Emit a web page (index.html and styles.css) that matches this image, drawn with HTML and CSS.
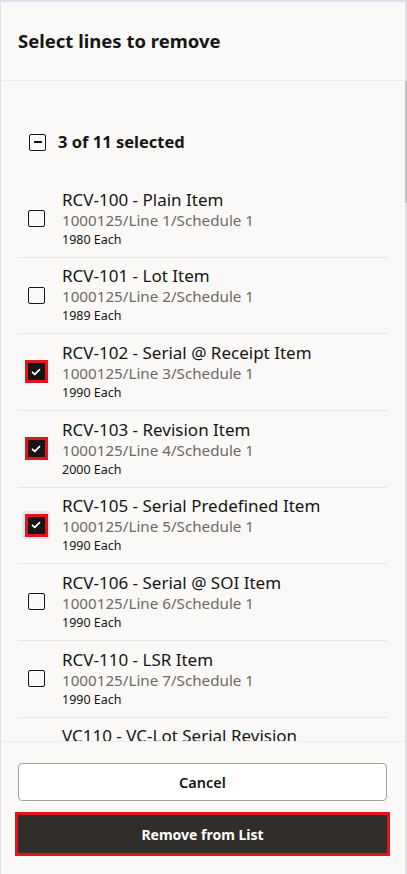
FILE: index.html
```html
<!DOCTYPE html>
<html lang="en">
<head>
<meta charset="utf-8">
<title>Select lines to remove</title>
<link rel="stylesheet" href="styles.css">
</head>
<body>
<div class="dialog">
  <header class="dlg-header">
    <h1 class="dlg-title">Select lines to remove</h1>
  </header>
  <div class="dlg-body">
    <div class="scroll-thumb"></div>
    <div class="scroller">
      <div class="select-all">
        <span class="cb cb-mixed"><span class="dash"></span></span>
        <span class="select-all-text">3 of 11 selected</span>
      </div>
      <ul class="lines">
        <li class="line">
          <div class="cb-cell"><span class="cb"></span></div>
          <div class="line-text">
            <div class="line-title">RCV-100 - Plain Item</div>
            <div class="line-sub">1000125/Line 1/Schedule 1</div>
            <div class="line-qty">1980 Each</div>
          </div>
        </li>
        <li class="line">
          <div class="cb-cell"><span class="cb"></span></div>
          <div class="line-text">
            <div class="line-title">RCV-101 - Lot Item</div>
            <div class="line-sub">1000125/Line 2/Schedule 1</div>
            <div class="line-qty">1989 Each</div>
          </div>
        </li>
        <li class="line">
          <div class="cb-cell"><span class="cb cb-checked"><svg viewBox="0 0 16 16" class="tick"><path d="M4 8.3l2.6 2.5L12 5.4" /></svg></span></div>
          <div class="line-text">
            <div class="line-title">RCV-102 - Serial @ Receipt Item</div>
            <div class="line-sub">1000125/Line 3/Schedule 1</div>
            <div class="line-qty">1990 Each</div>
          </div>
        </li>
        <li class="line">
          <div class="cb-cell"><span class="cb cb-checked"><svg viewBox="0 0 16 16" class="tick"><path d="M4 8.3l2.6 2.5L12 5.4" /></svg></span></div>
          <div class="line-text">
            <div class="line-title">RCV-103 - Revision Item</div>
            <div class="line-sub">1000125/Line 4/Schedule 1</div>
            <div class="line-qty">2000 Each</div>
          </div>
        </li>
        <li class="line">
          <div class="cb-cell cb-focus"><span class="cb cb-checked"><svg viewBox="0 0 16 16" class="tick"><path d="M4 8.3l2.6 2.5L12 5.4" /></svg></span></div>
          <div class="line-text">
            <div class="line-title">RCV-105 - Serial Predefined Item</div>
            <div class="line-sub">1000125/Line 5/Schedule 1</div>
            <div class="line-qty">1990 Each</div>
          </div>
        </li>
        <li class="line">
          <div class="cb-cell"><span class="cb"></span></div>
          <div class="line-text">
            <div class="line-title">RCV-106 - Serial @ SOI Item</div>
            <div class="line-sub">1000125/Line 6/Schedule 1</div>
            <div class="line-qty">1990 Each</div>
          </div>
        </li>
        <li class="line">
          <div class="cb-cell"><span class="cb"></span></div>
          <div class="line-text">
            <div class="line-title">RCV-110 - LSR Item</div>
            <div class="line-sub">1000125/Line 7/Schedule 1</div>
            <div class="line-qty">1990 Each</div>
          </div>
        </li>
        <li class="line">
          <div class="cb-cell"><span class="cb"></span></div>
          <div class="line-text">
            <div class="line-title">VC110 - VC-Lot Serial Revision</div>
            <div class="line-sub">1000125/Line 8/Schedule 1</div>
            <div class="line-qty">1990 Each</div>
          </div>
        </li>
      </ul>
    </div>
  </div>
  <footer class="dlg-footer">
    <button class="btn btn-outline" type="button">Cancel</button>
    <button class="btn btn-primary" type="button">Remove from List</button>
  </footer>
</div>
</body>
</html>
```

FILE: styles.css
```css
* { box-sizing: border-box; }

html, body {
  margin: 0;
  padding: 0;
  height: 100%;
}

body {
  background: #dedee6;
  font-family: "Noto Sans", "Open Sans", sans-serif;
  color: #161513;
}

.dialog {
  width: 407px;
  height: 874px;
  border-top: 2px solid #dedee6;
  border-left: 1px solid #dedee6;
  border-right: 2px solid #dedee6;
  background: #faf9f8;
  display: flex;
  flex-direction: column;
}

.dlg-header {
  height: 79px;
  flex: 0 0 auto;
  border-bottom: 1px solid #efedeb;
  padding: 0 17px;
  display: flex;
  align-items: center;
}

.dlg-title {
  margin: 0 0 1px;
  font-size: 18.5px;
  font-weight: 700;
  line-height: 24px;
  letter-spacing: 0;
}

.dlg-body {
  flex: 1 1 auto;
  position: relative;
  min-height: 0;
}

.scroller {
  height: 100%;
  overflow: hidden;
  padding: 39px 18px 0 17px;
}

.scroll-thumb {
  position: absolute;
  right: -2px;
  top: 0;
  width: 2px;
  height: 122px;
  background: #bdbec9;
}

.select-all {
  height: 44px;
  display: flex;
  align-items: center;
  padding-left: 11px;
  margin-bottom: 17px;
}

.select-all-text {
  margin-left: 12px;
  font-size: 16.5px;
  font-weight: 700;
  line-height: 20px;
}

.cb {
  width: 17px;
  height: 17px;
  border: 1.5px solid #161513;
  border-radius: 2px;
  display: inline-flex;
  align-items: center;
  justify-content: center;
  background: transparent;
  flex: 0 0 auto;
}

.cb-mixed .dash {
  width: 8px;
  height: 1.5px;
  background: #161513;
}

.cb-checked {
  background: #161513;
  border-color: #161513;
  border-radius: 0;
  outline: 3px solid #e3141f;
}

.tick {
  width: 14px;
  height: 14px;
  fill: none;
  stroke: #ffffff;
  stroke-width: 2;
  stroke-linecap: round;
  stroke-linejoin: round;
}

.lines {
  list-style: none;
  margin: 0;
  padding: 0;
}

.line {
  display: flex;
  align-items: center;
  padding: 7.5px 0 8.2px;
  border-bottom: 1px solid #e9e7e5;
}

.cb-cell {
  width: 28px;
  height: 28px;
  margin-left: 4px;
  margin-right: 12px;
  border-radius: 4px;
  display: flex;
  align-items: center;
  justify-content: center;
  flex: 0 0 auto;
}

.cb-focus {
  background: #e8e6e4;
}

.line-text {
  min-width: 0;
  white-space: nowrap;
}

.line-title {
  font-size: 17px;
  line-height: 21px;
}

.line-sub {
  font-size: 15.2px;
  line-height: 20px;
  color: #6f6964;
}

.line-qty {
  font-size: 12.5px;
  line-height: 19px;
}

.dlg-footer {
  flex: 0 0 auto;
  height: 133px;
  border-top: 1px solid #efedeb;
  padding: 21px 18px 0 17px;
  display: flex;
  flex-direction: column;
  gap: 14px;
  background: #faf9f8;
}

.btn {
  height: 38px;
  width: 100%;
  border-radius: 4px;
  font-family: "Noto Sans", "Open Sans", sans-serif;
  font-size: 14.5px;
  font-weight: 600;
  cursor: pointer;
}

.btn-outline {
  background: #ffffff;
  border: 1px solid #a6a29e;
  color: #161513;
}

.btn-primary {
  background: #312d2a;
  border: none;
  color: #ffffff;
  border-radius: 0;
  outline: 3px solid #e3141f;
  font-size: 14px;
  font-weight: 700;
}
```
